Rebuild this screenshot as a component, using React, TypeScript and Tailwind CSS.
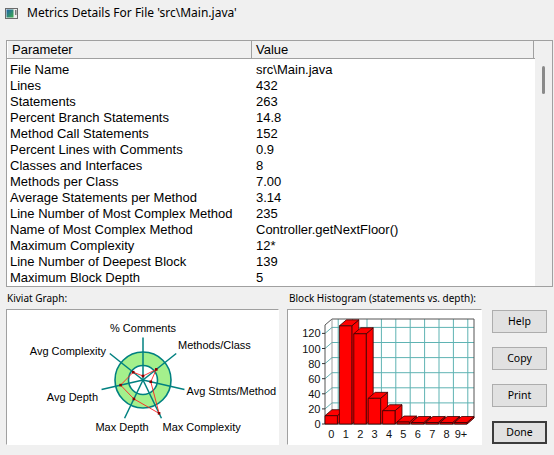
import React from "react";

const rows: [string, string][] = [
  ["File Name", "src\\Main.java"],
  ["Lines", "432"],
  ["Statements", "263"],
  ["Percent Branch Statements", "14.8"],
  ["Method Call Statements", "152"],
  ["Percent Lines with Comments", "0.9"],
  ["Classes and Interfaces", "8"],
  ["Methods per Class", "7.00"],
  ["Average Statements per Method", "3.14"],
  ["Line Number of Most Complex Method", "235"],
  ["Name of Most Complex Method", "Controller.getNextFloor()"],
  ["Maximum Complexity", "12*"],
  ["Line Number of Deepest Block", "139"],
  ["Maximum Block Depth", "5"],
];

function AppIcon() {
  return (
    <svg width="13" height="11" viewBox="0 0 13 11">
      <defs>
        <linearGradient id="ig" x1="0" y1="0" x2="1" y2="1">
          <stop offset="0" stopColor="#1d5fa8" />
          <stop offset="1" stopColor="#3fae4a" />
        </linearGradient>
      </defs>
      <rect x="0.5" y="0.5" width="12" height="10" fill="#ececec" stroke="#6b6b6b" />
      <rect x="1.5" y="1.5" width="7" height="8" fill="url(#ig)" />
      <rect x="10" y="2" width="1.5" height="5" fill="#7a7a7a" />
    </svg>
  );
}

function Kiviat() {
  const cx = 136;
  const cy = 70;
  const L = 42.5;
  const angles = Array.from({ length: 7 }, (_, i) => ((-90 + (360 / 7) * i) * Math.PI) / 180);
  const vals = [4, 17, 8, 37, 21, 23, 12.5];
  const pts = angles.map((a, i) => [cx + Math.cos(a) * vals[i], cy + Math.sin(a) * vals[i]]);
  const poly = pts.map((p) => p.join(",")).join(" ");
  const font = { fontFamily: "'Liberation Sans', Arial, sans-serif", fontSize: 11 };
  return (
    <svg width="271" height="134" viewBox="0 0 271 134">
      <circle cx={cx} cy={cy} r={28} fill="#a4f08c" stroke="#008080" strokeWidth="1.6" />
      <circle cx={cx} cy={cy} r={14.5} fill="#ffffff" stroke="#008080" strokeWidth="1.6" />
      {angles.map((a, i) => (
        <line
          key={i}
          x1={cx}
          y1={cy}
          x2={cx + Math.cos(a) * L}
          y2={cy + Math.sin(a) * L}
          stroke="#008080"
          strokeWidth="1.5"
        />
      ))}
      <polygon points={poly} fill="none" stroke="#ff2020" strokeWidth="0.9" />
      {pts.map((p, i) => (
        <rect key={i} x={p[0] - 1.3} y={p[1] - 1.3} width="2.6" height="2.6" fill="#8b0000" />
      ))}
      <g style={font} fill="#000">
        <text x={136} y={18} textAnchor="middle" dominantBaseline="central">% Comments</text>
        <text x={171} y={35} dominantBaseline="central">Methods/Class</text>
        <text x={99} y={41} textAnchor="end" dominantBaseline="central">Avg Complexity</text>
        <text x={179.5} y={81} dominantBaseline="central">Avg Stmts/Method</text>
        <text x={91} y={86.5} textAnchor="end" dominantBaseline="central">Avg Depth</text>
        <text x={115} y={117} textAnchor="middle" dominantBaseline="central">Max Depth</text>
        <text x={155.5} y={117} dominantBaseline="central">Max Complexity</text>
      </g>
    </svg>
  );
}

function Histogram() {
  const x0 = 37;
  const y0 = 114;
  const dx = 7;
  const dy = 6;
  const k = 0.755;
  const slot = 14.4;
  const bw = 12.4;
  const top = 9;
  const right = 186;
  const values = [11, 130, 119.5, 34, 17.6, 2.6, 0, 0, 0, 0];
  const labels = ["0", "1", "2", "3", "4", "5", "6", "7", "8", "9+"];
  const ticks = [0, 20, 40, 60, 80, 100, 120];
  const grid = "#5fb3b3";
  const font = { fontFamily: "'Liberation Sans', Arial, sans-serif", fontSize: 11 };
  return (
    <svg width="193" height="134" viewBox="0 0 193 134">
      {/* back wall grid */}
      {ticks.slice(1).map((v) => (
        <g key={v}>
          <line x1={x0 + dx} y1={y0 - dy - v * k} x2={right} y2={y0 - dy - v * k} stroke={grid} strokeWidth="1" />
          <line x1={x0} y1={y0 - v * k} x2={x0 + dx} y2={y0 - dy - v * k} stroke={grid} strokeWidth="1" />
        </g>
      ))}
      {labels.map((_, i) => (
        <line
          key={i}
          x1={50.2 + slot * i}
          y1={top}
          x2={50.2 + slot * i}
          y2={y0 - dy}
          stroke={grid}
          strokeWidth="1"
        />
      ))}
      {/* frame */}
      <polyline
        points={`${x0},${y0} ${x0},${top + dy} ${x0 + dx},${top} ${right},${top} ${right},${y0 - dy}`}
        fill="none"
        stroke="#555"
        strokeWidth="1"
      />
      <line x1={x0 + dx} y1={top} x2={x0 + dx} y2={y0 - dy} stroke="#888" strokeWidth="0.8" />
      <line x1={x0} y1={y0} x2={x0 + dx} y2={y0 - dy} stroke="#555" strokeWidth="0.8" />
      <line x1={x0 + dx} y1={y0 - dy} x2={right} y2={y0 - dy} stroke="#555" strokeWidth="0.8" />
      <line x1={x0} y1={y0} x2={right - dx} y2={y0} stroke="#333" strokeWidth="1" />
      <line x1={right - dx} y1={y0} x2={right} y2={y0 - dy} stroke="#555" strokeWidth="0.8" />
      {ticks.map((v) => (
        <g key={v}>
          <line x1={x0 - 3} y1={y0 - v * k} x2={x0} y2={y0 - v * k} stroke="#333" strokeWidth="1" />
          <text x={32.5} y={y0 - v * k} textAnchor="end" dominantBaseline="central" style={font} fill="#111">
            {v}
          </text>
        </g>
      ))}
      {/* bars */}
      {values.map((v, i) => {
        const x = x0 + slot * i;
        const h = Math.max(v * k, 1.5);
        const y = y0 - h;
        return (
          <g key={i} stroke="#3a0000" strokeWidth="0.8" strokeLinejoin="round" fill="#ff0000">
            <polygon points={`${x + bw},${y} ${x + bw + dx},${y - dy} ${x + bw + dx},${y0 - dy} ${x + bw},${y0}`} />
            <polygon points={`${x},${y} ${x + bw},${y} ${x + bw + dx},${y - dy} ${x + dx},${y - dy}`} />
            <rect x={x} y={y} width={bw} height={h} />
          </g>
        );
      })}
      {labels.map((l, i) => (
        <text
          key={l}
          x={43.4 + slot * i}
          y={123.5}
          textAnchor="middle"
          dominantBaseline="central"
          style={font}
          fill="#111"
        >
          {l}
        </text>
      ))}
    </svg>
  );
}

function Btn({ label, def }: { label: string; def?: boolean }) {
  return (
    <div
      className={
        "h-[23px] w-[55px] flex items-center justify-center bg-[#e1e1e1] text-[10.5px] text-black font-['Noto_Sans',sans-serif] " +
        (def ? "border-2 border-[#3c3c3c]" : "border border-[#adadad]")
      }
    >
      {label}
    </div>
  );
}

export default function App() {
  return (
    <div className="w-[554px] h-[455px] bg-[#f0f0f0] overflow-hidden flex flex-col font-['Liberation_Sans',Arial,sans-serif] text-black">
      <div className="h-[26px] flex items-center pl-[5px] gap-[9px] shrink-0">
        <AppIcon />
        <span className="text-[12px] font-['Noto_Sans',sans-serif] leading-none">
          Metrics Details For File 'src\Main.java'
        </span>
      </div>
      <div className="ml-[6px] mt-[14px] w-[547px] h-[247px] border border-[#a0a0a0] flex shrink-0 bg-white">
        <div className="w-[528px] flex flex-col">
          <div className="h-[18px] flex bg-[#f0f0f0] border-b border-[#a0a0a0] text-[13px] leading-[17px] shrink-0">
            <div className="w-[245px] pl-[4px] border-r border-[#a0a0a0] border-l border-l-white">Parameter</div>
            <div className="w-[282px] pl-[4px] border-r border-[#a0a0a0]">Value</div>
          </div>
          <div className="flex-1 overflow-hidden pt-[3px] bg-white">
            {rows.map(([p, v]) => (
              <div key={p} className="h-[16px] flex text-[13px] leading-[16px] whitespace-nowrap">
                <div className="w-[245px] pl-[3px]">{p}</div>
                <div className="pl-[4px]">{v}</div>
              </div>
            ))}
          </div>
        </div>
        <div className="w-[17px] bg-[#f0f0f0] flex justify-center">
          <div className="mt-[25px] w-[3px] h-[28px] rounded-full bg-[#8a8a8a]" />
        </div>
      </div>
      <div className="flex shrink-0">
        <div className="ml-[6px] w-[273px] flex flex-col">
          <div className="mt-[5px] h-[13px] leading-[13px] pl-[1px] text-[10px] font-['Noto_Sans',sans-serif]">
            Kiviat Graph:
          </div>
          <div className="mt-[4px] h-[136px] bg-white border border-[#a0a0a0] border-r-[#ffffff] border-b-[#ffffff]">
            <Kiviat />
          </div>
        </div>
        <div className="ml-[8px] w-[195px] flex flex-col">
          <div className="mt-[5px] h-[13px] leading-[13px] pl-[2px] text-[10px] font-['Noto_Sans',sans-serif] whitespace-nowrap">
            Block Histogram (statements vs. depth):
          </div>
          <div className="mt-[4px] h-[136px] bg-white border border-[#a0a0a0] border-r-[#ffffff] border-b-[#ffffff]">
            <Histogram />
          </div>
        </div>
        <div className="ml-[10px] w-[55px] flex flex-col gap-[14px] pt-[23px]">
          <Btn label="Help" />
          <Btn label="Copy" />
          <Btn label="Print" />
          <Btn label="Done" def />
        </div>
      </div>
    </div>
  );
}
